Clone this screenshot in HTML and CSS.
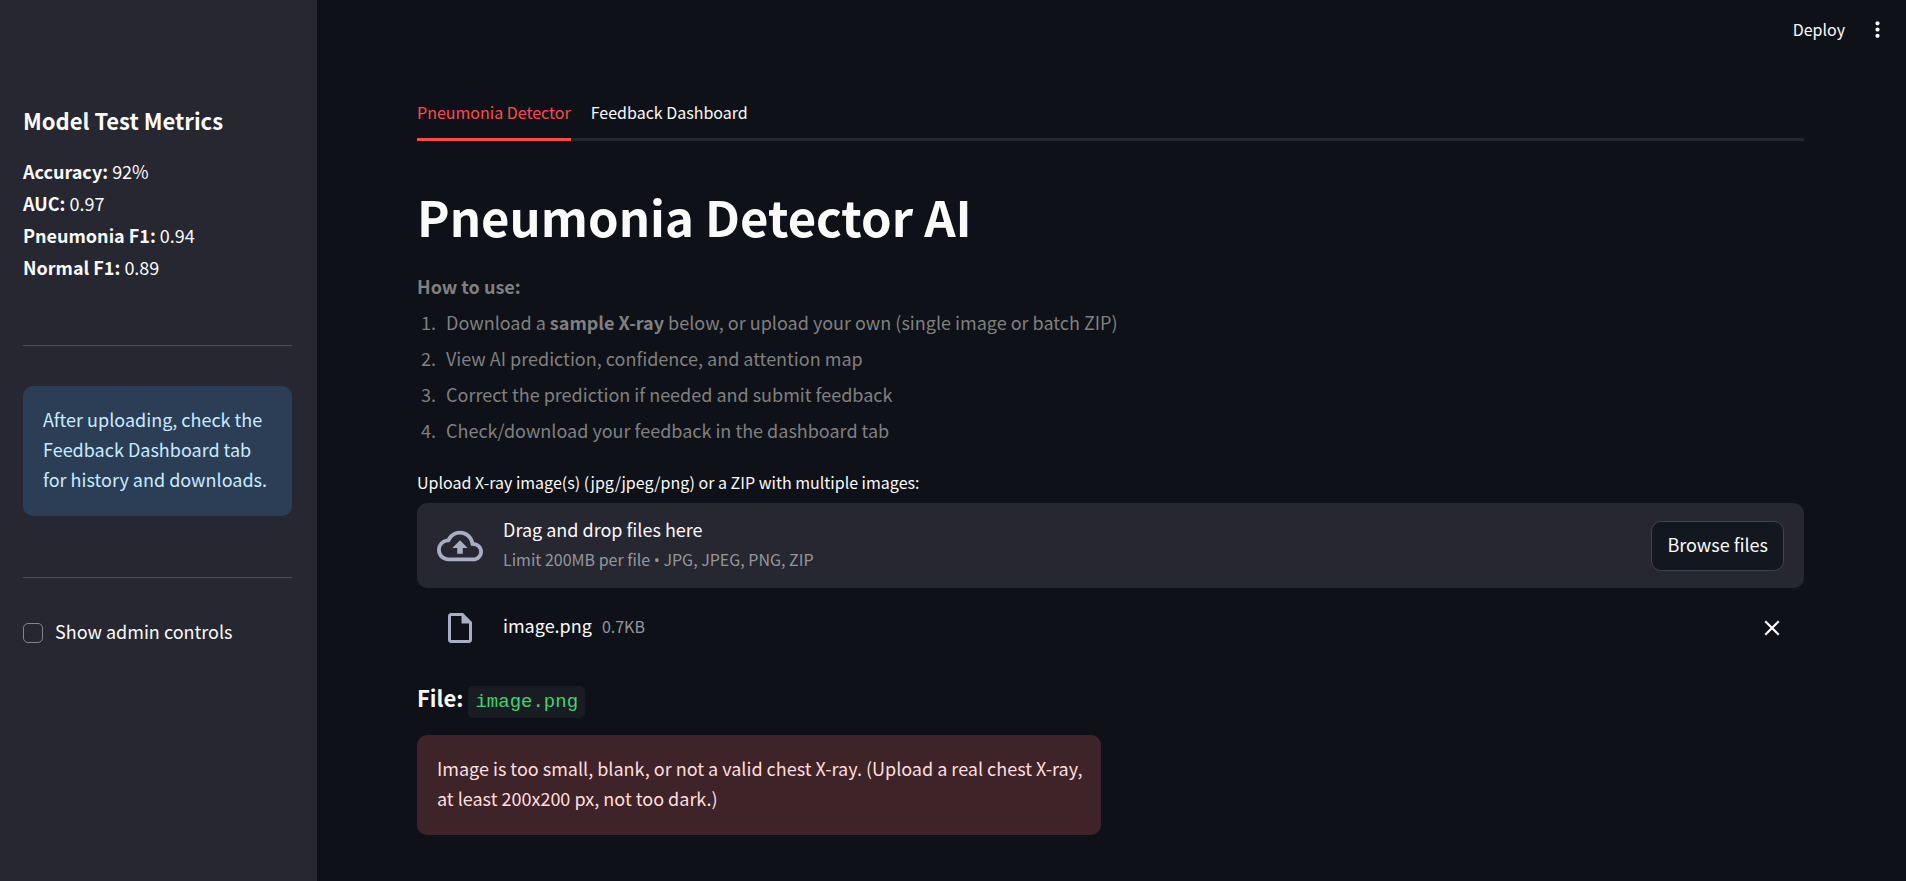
FILE: index.html
```html
<!DOCTYPE html>
<html lang="en">
<head>
<meta charset="utf-8">
<title>Pneumonia Detector AI</title>
<link rel="stylesheet" href="styles.css">
</head>
<body>
<div class="app">
  <aside class="sidebar">
    <h2 class="sidebar-title">Model Test Metrics</h2>
    <ul class="metrics">
      <li><strong>Accuracy:</strong> 92%</li>
      <li><strong>AUC:</strong> 0.97</li>
      <li><strong>Pneumonia F1:</strong> 0.94</li>
      <li><strong>Normal F1:</strong> 0.89</li>
    </ul>
    <hr class="divider">
    <p class="alert alert-info">After uploading, check the Feedback Dashboard tab for history and downloads.</p>
    <hr class="divider">
    <label class="checkbox" for="admin"><input class="checkbox-input" type="checkbox" id="admin"><span class="checkbox-text">Show admin controls</span></label>
  </aside>
  <div class="page">
    <header class="toolbar">
      <button class="plain-button deploy" type="button">Deploy</button>
      <button class="plain-button menu" type="button" aria-label="Menu">
        <svg class="icon-menu" viewBox="0 0 24 24" aria-hidden="true"><path d="M12 8c1.100 0 2-.9 2-2s-.9-2-2-2-2 .9-2 2 .9 2 2 2zm0 2c-1.100 0-2 .9-2 2s.9 2 2 2 2-.9 2-2-.9-2-2-2zm0 6c-1.100 0-2 .9-2 2s.9 2 2 2 2-.9 2-2-.9-2-2-2z"/></svg>
      </button>
    </header>
    <main class="content">
      <div class="tabs" role="tablist">
        <button class="tab tab-active" type="button" role="tab" aria-selected="true">Pneumonia Detector</button>
        <button class="tab" type="button" role="tab" aria-selected="false">Feedback Dashboard</button>
      </div>
      <h1 class="title">Pneumonia Detector AI</h1>
      <section class="guide">
        <p class="guide-title"><strong>How to use:</strong></p>
        <ol class="guide-list">
          <li>Download a <strong>sample X-ray</strong> below, or upload your own (single image or batch ZIP)</li>
          <li>View AI prediction, confidence, and attention map</li>
          <li>Correct the prediction if needed and submit feedback</li>
          <li>Check/download your feedback in the dashboard tab</li>
        </ol>
      </section>
      <p class="upload-label" id="upload-label">Upload X-ray image(s) (jpg/jpeg/png) or a ZIP with multiple images:</p>
      <section class="dropzone" aria-labelledby="upload-label">
        <svg class="icon-cloud" viewBox="0 0 24 24" aria-hidden="true"><path d="M19.35 10.04A7.49 7.49 0 0 0 12 4C9.110 4 6.600 5.640 5.350 8.040A5.994 5.994 0 0 0 0 14c0 3.310 2.690 6 6 6h13c2.760 0 5-2.240 5-5 0-2.640-2.050-4.780-4.650-4.960zM19 18H6c-2.210 0-4-1.790-4-4 0-2.050 1.530-3.760 3.560-3.970l1.070-.11.5-.95A5.469 5.469 0 0 1 12 6c2.620 0 4.880 1.860 5.390 4.430l.3 1.500 1.530.11A2.980 2.980 0 0 1 22 15c0 1.650-1.350 3-3 3zM8 13h2.550v3h2.900v-3H16l-4-4z"/></svg>
        <div class="dropzone-text">
          <span class="dropzone-title">Drag and drop files here</span>
          <span class="small-muted">Limit 200MB per file <span class="bullet">•</span> JPG, JPEG, PNG, ZIP</span>
        </div>
        <button class="browse" type="button">Browse files</button>
      </section>
      <div class="file-row">
        <span class="file-icon"><svg class="icon-file" viewBox="0 0 24 24" aria-hidden="true"><path fill-rule="evenodd" d="M14 2H6c-1.100 0-2 .9-2 2v16c0 1.100.9 2 2 2h12c1.100 0 2-.9 2-2V8zM6 20V4h7v5h5v11z"/></svg></span>
        <span class="file-text"><span class="file-name">image.png</span><span class="small-muted">0.7KB</span></span>
        <button class="plain-button remove" type="button" aria-label="Remove image.png">
          <svg class="icon-close" viewBox="0 0 16 16" aria-hidden="true"><path d="M2 2l12 12M14 2L2 14"/></svg>
        </button>
      </div>
      <h3 class="file-heading">File: <code class="code">image.png</code></h3>
      <div class="columns">
        <p class="alert alert-error">Image is too small, blank, or not a valid chest X-ray. (Upload a real chest X-ray, at least 200x200 px, not too dark.)</p>
      </div>
    </main>
  </div>
</div>
</body>
</html>
```
FILE: styles.css
```css
* {
  box-sizing: border-box;
}

body {
  margin: 0;
  background: #0e1117;
  color: #fafafa;
  font-family: "Noto Sans CJK SC", "Noto Sans", sans-serif;
  font-size: 18px;
  line-height: 32px;
}

h1, h2, h3, p, ul, ol {
  margin: 0;
  padding: 0;
}

button {
  font: inherit;
  color: inherit;
  cursor: pointer;
}

.app {
  display: flex;
  min-height: 100vh;
}

.sidebar {
  flex: 0 0 317px;
  padding: 102px 25px 40px 23px;
  background: #262730;
}

.sidebar-title {
  margin-bottom: 17px;
  font-size: 22px;
  line-height: 36px;
}

.metrics {
  padding-bottom: 2px;
  list-style: none;
}

.divider {
  height: 1px;
  margin: 60px 0 40px;
  border: 0;
  background: #4c4d55;
}

.alert {
  padding: 18px 20px 22px;
  border-radius: 10px;
  line-height: 30px;
}

.alert-info {
  margin-bottom: 61px;
  background: #2b3e56;
  color: #c7ebff;
}

.alert-error {
  padding-right: 12px;
  background: #3e2428;
  color: #ffdede;
}

.checkbox {
  display: flex;
  align-items: center;
  gap: 12px;
}

.checkbox-input {
  appearance: none;
  width: 20px;
  height: 20px;
  margin: 0;
  border: 1px solid #83848a;
  border-radius: 5px;
}

.checkbox-input:checked {
  background: #ff4b4b;
}

.checkbox-text {
  padding-bottom: 3px;
  line-height: 26px;
}

.page {
  flex: 1;
  min-width: 0;
}

.toolbar {
  display: flex;
  align-items: center;
  justify-content: flex-end;
  gap: 20px;
  height: 58px;
  padding-right: 16px;
}

.plain-button {
  display: flex;
  align-items: center;
  justify-content: center;
  padding: 0;
  border: 0;
  background: none;
}

.deploy {
  font-size: 16px;
}

.icon-menu {
  width: 25px;
  height: 25px;
  fill: currentColor;
}

.content {
  padding: 30px 102px 40px 100px;
}

.tabs {
  display: flex;
  gap: 20px;
  border-bottom: 3px solid #262730;
}

.tab {
  height: 53px;
  margin-bottom: -3px;
  padding: 0 0 2px;
  border: 0;
  border-bottom: 3px solid transparent;
  background: none;
  font-size: 16px;
}

.tab-active {
  border-color: #ff4b4b;
  color: #ff4b4b;
}

.title {
  margin: 42px 0 21px;
  font-size: 49px;
  line-height: 66px;
}

.guide {
  color: #808080;
}

.guide-list {
  margin-top: 2px;
  padding-left: 23px;
  line-height: 36px;
}

.guide-list li {
  padding-left: 6px;
}

.upload-label {
  margin: 22px 0 9px;
  font-size: 16px;
  line-height: 24px;
}

.dropzone {
  display: flex;
  align-items: center;
  gap: 20px;
  min-height: 85px;
  padding: 10px 20px;
  border-radius: 10px;
  background: #262730;
}

.icon-cloud {
  flex: none;
  width: 46px;
  height: 46px;
  fill: #a9aec3;
}

.dropzone-text {
  display: flex;
  flex: 1;
  flex-direction: column;
  padding-bottom: 3px;
  line-height: 30px;
}

.small-muted {
  color: #95969c;
  font-size: 16px;
}

.bullet {
  font-family: "Open Sans", sans-serif;
}

.browse {
  height: 50px;
  padding: 0 15px 4px;
  border: 1px solid #41444c;
  border-radius: 10px;
  background: #131720;
}

.file-row {
  display: flex;
  align-items: center;
  min-height: 50px;
  margin-top: 15px;
  padding: 0 20px;
}

.file-icon {
  display: flex;
  justify-content: center;
  width: 46px;
  margin-right: 20px;
}

.icon-file {
  width: 36px;
  height: 36px;
  fill: #a9aec3;
}

.file-text {
  padding-bottom: 5px;
}

.file-name {
  margin-right: 10px;
}

.remove {
  width: 25px;
  height: 25px;
  margin-left: auto;
}

.icon-close {
  width: 18px;
  height: 18px;
  fill: none;
  stroke: currentColor;
  stroke-width: 2;
}

.file-heading {
  margin: 26px 0 15px;
  font-size: 22px;
  line-height: 36px;
}

.code {
  padding: 5px 7px;
  border-radius: 5px;
  background: #1a1c24;
  color: #3dd56d;
  font-family: "Liberation Mono", monospace;
  font-size: 19px;
  font-weight: 400;
}

.columns {
  display: grid;
  grid-template-columns: 1fr 1fr;
  gap: 20px;
}
```
